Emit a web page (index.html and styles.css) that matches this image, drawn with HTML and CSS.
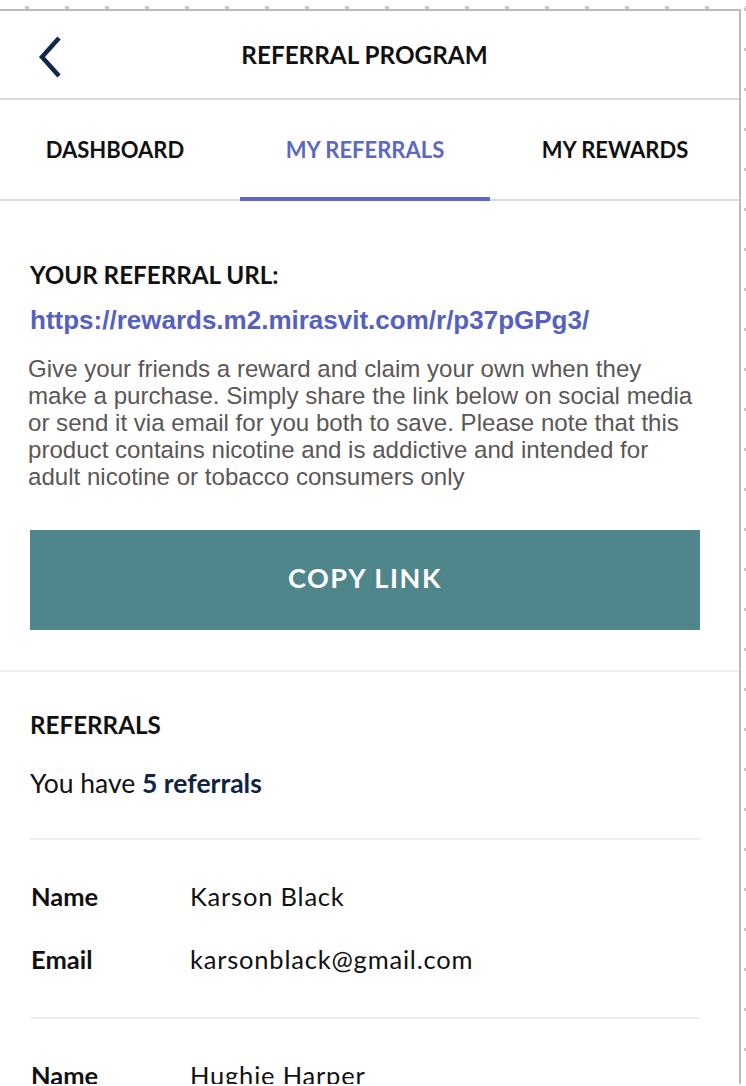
FILE: index.html
```html
<!DOCTYPE html>
<html lang="en">
<head>
<meta charset="utf-8">
<title>Referral Program</title>
<link rel="stylesheet" href="styles.css">
</head>
<body>
<div class="frame">
  <header class="topbar">
    <a class="back" href="#" aria-label="Back">
      <svg width="26" height="42" viewBox="0 0 26 42"><path d="M22 2 L5 21 L22 40" fill="none" stroke="#0f2748" stroke-width="4.5" stroke-linejoin="miter"/></svg>
    </a>
    <h1 class="title">REFERRAL PROGRAM</h1>
  </header>
  <nav class="tabs">
    <a class="tab" href="#">DASHBOARD</a>
    <a class="tab active" href="#">MY REFERRALS</a>
    <a class="tab" href="#">MY REWARDS</a>
  </nav>
  <section class="share">
    <h2 class="heading">YOUR REFERRAL URL:</h2>
    <a class="url" href="#">https://rewards.m2.mirasvit.com/r/p37pGPg3/</a>
    <p class="desc">Give your friends a reward and claim your own when they make a purchase. Simply share the link below on social media or send it via email for you both to save. Please note that this product contains nicotine and is addictive and intended for adult nicotine or tobacco consumers only</p>
    <button class="copy" type="button">COPY LINK</button>
  </section>
  <section class="referrals">
    <h2 class="heading">REFERRALS</h2>
    <p class="count">You have <strong>5 referrals</strong></p>
    <ul class="list">
      <li class="item">
        <div class="row"><span class="label">Name</span><span class="value">Karson Black</span></div>
        <div class="row"><span class="label">Email</span><span class="value">karsonblack@gmail.com</span></div>
      </li>
      <li class="item">
        <div class="row"><span class="label">Name</span><span class="value">Hughie Harper</span></div>
        <div class="row"><span class="label">Email</span><span class="value">hughieharper@gmail.com</span></div>
      </li>
    </ul>
  </section>
</div>
</body>
</html>
```
FILE: styles.css
```css
html, body {
  margin: 0;
  padding: 0;
  height: 100%;
  overflow: hidden;
}
body {
  background-color: #fff;
  background-image:
    linear-gradient(to right, transparent 25px, #c9c9c9 25px, #c9c9c9 29px, transparent 29px),
    linear-gradient(to bottom, transparent 8px, #c9c9c9 8px, #c9c9c9 11px, transparent 11px);
  background-size: 40px 3px, 3px 40px;
  background-position: 0 6px, 744px 0;
  background-repeat: repeat-x, repeat-y;
  font-family: "Lato", "Liberation Sans", sans-serif;
  color: #111;
}
.frame {
  margin-top: 9px;
  width: 739px;
  height: 1073px;
  border-top: 2px solid #bdbabd;
  border-right: 2px solid #bdbabd;
  background: #fff;
  overflow: hidden;
}
.topbar {
  height: 87px;
  border-bottom: 2px solid #d9d9d9;
  display: flex;
  align-items: center;
  position: relative;
}
.back {
  position: absolute;
  left: 37px;
  top: 25px;
  display: block;
  line-height: 0;
}
.title {
  flex: 1;
  margin: 0;
  padding-right: 10px;
  text-align: center;
  font-size: 24.3px;
  font-weight: 700;
}
.tabs {
  display: grid;
  grid-template-columns: 250px 250px 250px;
  margin-left: -10px;
}
.tab {
  box-sizing: border-box;
  height: 101px;
  display: flex;
  align-items: center;
  justify-content: center;
  border-bottom: 2px solid #d9d9d9;
  text-decoration: none;
  color: #111;
  font-size: 22px;
  font-weight: 700;
}
.tab.active {
  color: #5c68c4;
  border-bottom: 4px solid #5c68c4;
  padding-top: 2px;
}
.share {
  padding: 60px 39px 40px 30px;
  border-bottom: 2px solid #f0f0f0;
}
.heading {
  margin: 0;
  font-size: 24.2px;
  line-height: 28px;
  font-weight: 700;
}
.url {
  display: block;
  margin-top: 17px;
  font-family: "Liberation Sans", Arial, sans-serif;
  font-size: 26px;
  line-height: 28px;
  font-weight: 700;
  color: #5561c2;
  text-decoration: none;
}
.desc {
  margin: 21px 4px 0 -2px;
  font-family: "Liberation Sans", Arial, sans-serif;
  font-size: 24.1px;
  line-height: 27px;
  color: #5a5757;
}
.copy {
  display: block;
  width: 100%;
  height: 100px;
  margin-top: 40px;
  padding: 0 0 6px;
  border: 0;
  background: #4f868c;
  color: #fff;
  font-family: "Lato", sans-serif;
  font-size: 27px;
  font-weight: 700;
  letter-spacing: 1.6px;
}
.referrals {
  padding: 39px 39px 0 30px;
}
.count {
  margin: 29px 0 0;
  font-size: 26.5px;
  line-height: 30px;
}
.count strong {
  color: #0e2444;
  font-weight: 700;
}
.list {
  list-style: none;
  margin: 40px 0 0;
  padding: 0;
}
.item {
  border-top: 2px solid #efefef;
  padding: 41px 0 43px;
  display: flex;
  flex-direction: column;
  gap: 33px;
}
.row {
  display: grid;
  grid-template-columns: 160px 1fr;
  font-size: 25.5px;
  line-height: 30px;
}
.label {
  font-weight: 700;
  padding-left: 1px;
}
.value {
  letter-spacing: 0.8px;
}
```
